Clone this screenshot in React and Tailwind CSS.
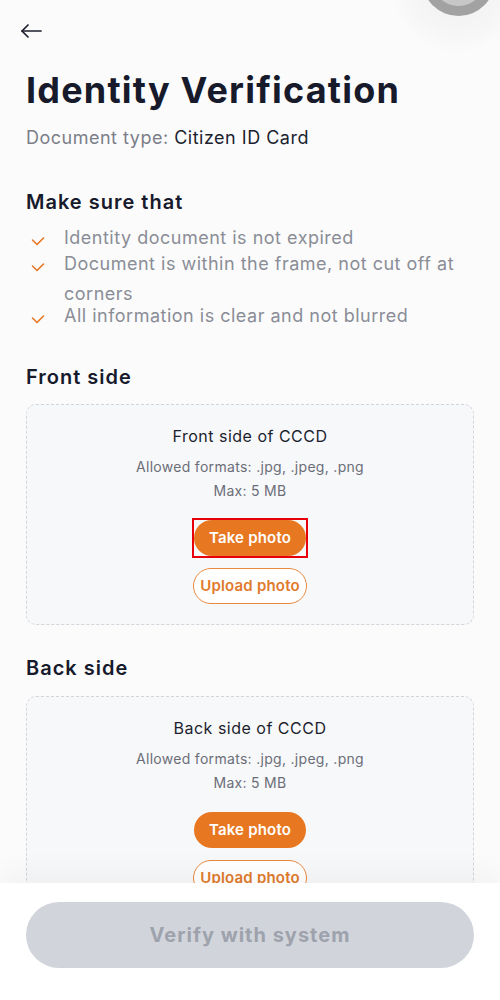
import React from "react";

function Check() {
  return (
    <svg width="16" height="16" viewBox="0 0 16 16" className="shrink-0 ml-[4px] mt-[11px]">
      <path d="M2.5 6 L7 10.5 L13.5 4" fill="none" stroke="#e87722" strokeWidth="1.6" strokeLinecap="round" strokeLinejoin="round" />
    </svg>
  );
}

function UploadCard({ title, highlight, className }) {
  return (
    <div className={"rounded-[10px] border-[1.5px] border-dashed border-[#d2d5da] bg-[#f7f8fa] flex flex-col items-center pt-[19px] pb-[20px] " + className}>
      <div className="text-[16px] text-[#1c1f2e] leading-[24px] tracking-[0.5px]">{title}</div>
      <div className="mt-[9px] text-[14px] text-[#6b6e78] leading-[20px] tracking-[0.3px]">Allowed formats: .jpg, .jpeg, .png</div>
      <div className="mt-[4px] text-[14px] text-[#6b6e78] leading-[20px] tracking-[0.3px]">Max: 5 MB</div>
      <div className="relative mt-[19px]">
        <button className="block w-[112px] h-[36px] rounded-full bg-[#e87722] text-white text-[15px] font-semibold tracking-[0.2px]">Take photo</button>
        {highlight && <div className="absolute -inset-[2px] border-2 border-[#e8000b] pointer-events-none" />}
      </div>
      <button className="mt-[12px] w-[114px] h-[36px] rounded-full border border-[#e8893f] bg-white text-[#e07a2c] text-[15px] font-semibold tracking-[0.2px]">Upload photo</button>
    </div>
  );
}

export default function App() {
  return (
    <div className="relative w-[500px] h-[1000px] overflow-hidden bg-[#fbfbfc]" style={{ fontFamily: "Inter, 'Noto Sans', sans-serif" }}>
      <div className="absolute left-[388px] top-[-85px] w-[140px] h-[140px] rounded-full bg-[radial-gradient(circle,rgba(0,0,0,0.05)_0%,rgba(0,0,0,0.02)_50%,rgba(0,0,0,0)_70%)]" />
      <div className="absolute left-[422px] top-[-57px] w-[73px] h-[73px] rounded-full bg-[#a2a2a2] flex items-center justify-center">
        <div className="w-[53px] h-[53px] rounded-full bg-[#c7c7c7]" />
      </div>
      <div className="px-[26px]">
        <div className="pt-[19px] h-[43px] -ml-[7px]">
          <svg width="24" height="24" viewBox="0 0 24 24" fill="none" stroke="#1c1f2e" strokeWidth="1.7" strokeLinecap="round" strokeLinejoin="round">
            <path d="M22 12H3" />
            <path d="M9 6 L3 12 L9 18" />
          </svg>
        </div>
        <h1 className="mt-[25px] text-[36px] leading-[44px] font-bold text-[#171a2b] tracking-[1.2px]">Identity Verification</h1>
        <div className="mt-[12px] text-[18px] leading-[28px] text-[#7b7e88] tracking-[0.5px]">
          Document type: <span className="text-[#1c1f2e]">Citizen ID Card</span>
        </div>
        <h2 className="mt-[36px] text-[20px] leading-[28px] font-semibold text-[#171a2b] tracking-[1px]">Make sure that</h2>
        <ul className="mt-[7px] text-[18px] text-[#8a8d96] tracking-[0.5px]">
          <li className="flex gap-[18px] leading-[30px]"><Check /><span>Identity document is not expired</span></li>
          <li className="flex gap-[18px] leading-[30px] -mt-[4px]"><Check /><span>Document is within the frame, not cut off at corners</span></li>
          <li className="flex gap-[18px] leading-[30px] -mt-[8px]"><Check /><span>All information is clear and not blurred</span></li>
        </ul>
        <h2 className="mt-[32px] text-[20px] leading-[28px] font-semibold text-[#171a2b] tracking-[1px]">Front side</h2>
        <UploadCard title="Front side of CCCD" highlight className="mt-[13px]" />
        <h2 className="mt-[29px] text-[20px] leading-[28px] font-semibold text-[#171a2b] tracking-[1px]">Back side</h2>
        <UploadCard title="Back side of CCCD" className="mt-[14px]" />
      </div>
      <div className="absolute left-0 right-0 bottom-0 h-[117px] bg-white shadow-[0_-14px_24px_rgba(0,0,0,0.03)] px-[26px] pt-[19px]">
        <button className="w-full h-[66px] rounded-full bg-[#d1d5db] text-[#9ea2ad] text-[20px] font-bold tracking-[1px]">Verify with system</button>
      </div>
    </div>
  );
}
